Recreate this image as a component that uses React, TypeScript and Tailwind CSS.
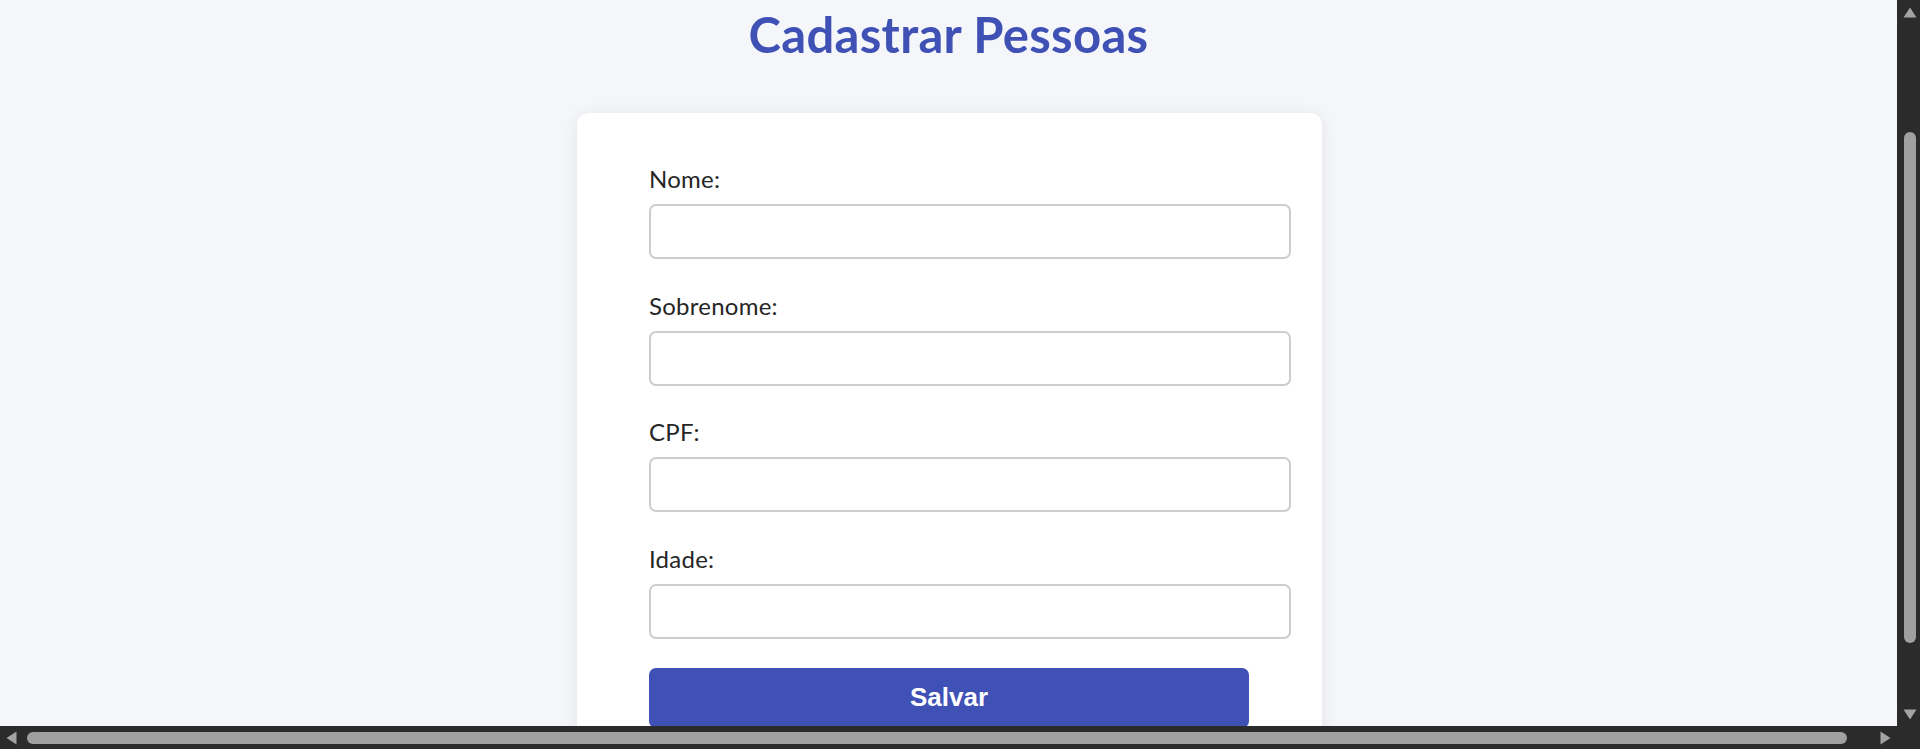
import React from "react";

const fields = ["Nome:", "Sobrenome:", "CPF:", "Idade:"];

function Field({ label }: { label: string }) {
  return (
    <div className="flex flex-col mb-[30.5px]">
      <label className="block text-[24px] leading-[32px] tracking-[0.25px] text-[#262626] mb-[9px]">
        {label}
      </label>
      <input
        type="text"
        className="w-[642px] h-[55px] rounded-[7px] border-2 border-[#cdcdcd] bg-white px-[18px] outline-none"
      />
    </div>
  );
}

export default function App() {
  return (
    <div className="w-[1920px] h-[749px] flex flex-col overflow-hidden bg-[#2b2b2b] font-['Lato','Noto_Sans',sans-serif]">
      <div className="flex flex-1 min-h-0">
        <main className="w-[1897px] h-[726px] overflow-hidden bg-[#f5f6fa] flex flex-col items-center">
          <h1 className="mt-[5px] text-[49px] leading-[58px] tracking-[0.3px] font-bold text-[#3f51b5]">
            Cadastrar Pessoas
          </h1>
          <div className="mt-[50px] ml-[2px] w-[745px] shrink-0 bg-white rounded-[12px] shadow-[0_2px_16px_rgba(0,0,0,0.08)] pl-[72px] pr-[72px] pt-[50px]">
            {fields.map((f) => (
              <Field key={f} label={f} />
            ))}
            <button
              type="button"
              className="block -mt-[1.5px] w-[600px] h-[60px] rounded-[7px] bg-[#3f51b5] text-white text-[26px] font-bold font-['Liberation_Sans',Arial,sans-serif]"
            >
              Salvar
            </button>
            <div className="h-[60px]" />
          </div>
        </main>
        <div className="w-[23px] h-[726px] bg-[#2b2b2b] flex flex-col items-center">
          <svg width="14" height="11" viewBox="0 0 14 11" className="mt-[7px] ml-[2px]">
            <path d="M7 0.5 L13.5 10.5 L0.5 10.5 Z" fill="#a3a3a3" />
          </svg>
          <div className="mt-[114px] ml-[2px] w-[12px] h-[511px] rounded-full bg-[#a0a0a0]" />
          <div className="flex-1" />
          <svg width="14" height="11" viewBox="0 0 14 11" className="mb-[6px] ml-[2px]">
            <path d="M0.5 0.5 L13.5 0.5 L7 10.5 Z" fill="#a3a3a3" />
          </svg>
        </div>
      </div>
      <div className="h-[23px] flex items-center bg-[#2b2b2b]">
        <svg width="11" height="14" viewBox="0 0 11 14" className="ml-[6px]">
          <path d="M10.5 0.5 L10.5 13.5 L0.5 7 Z" fill="#a3a3a3" />
        </svg>
        <div className="ml-[10px] w-[1820px] h-[12px] rounded-full bg-[#a0a0a0]" />
        <svg width="11" height="14" viewBox="0 0 11 14" className="ml-[33px]">
          <path d="M0.5 0.5 L10.5 7 L0.5 13.5 Z" fill="#a3a3a3" />
        </svg>
      </div>
    </div>
  );
}
